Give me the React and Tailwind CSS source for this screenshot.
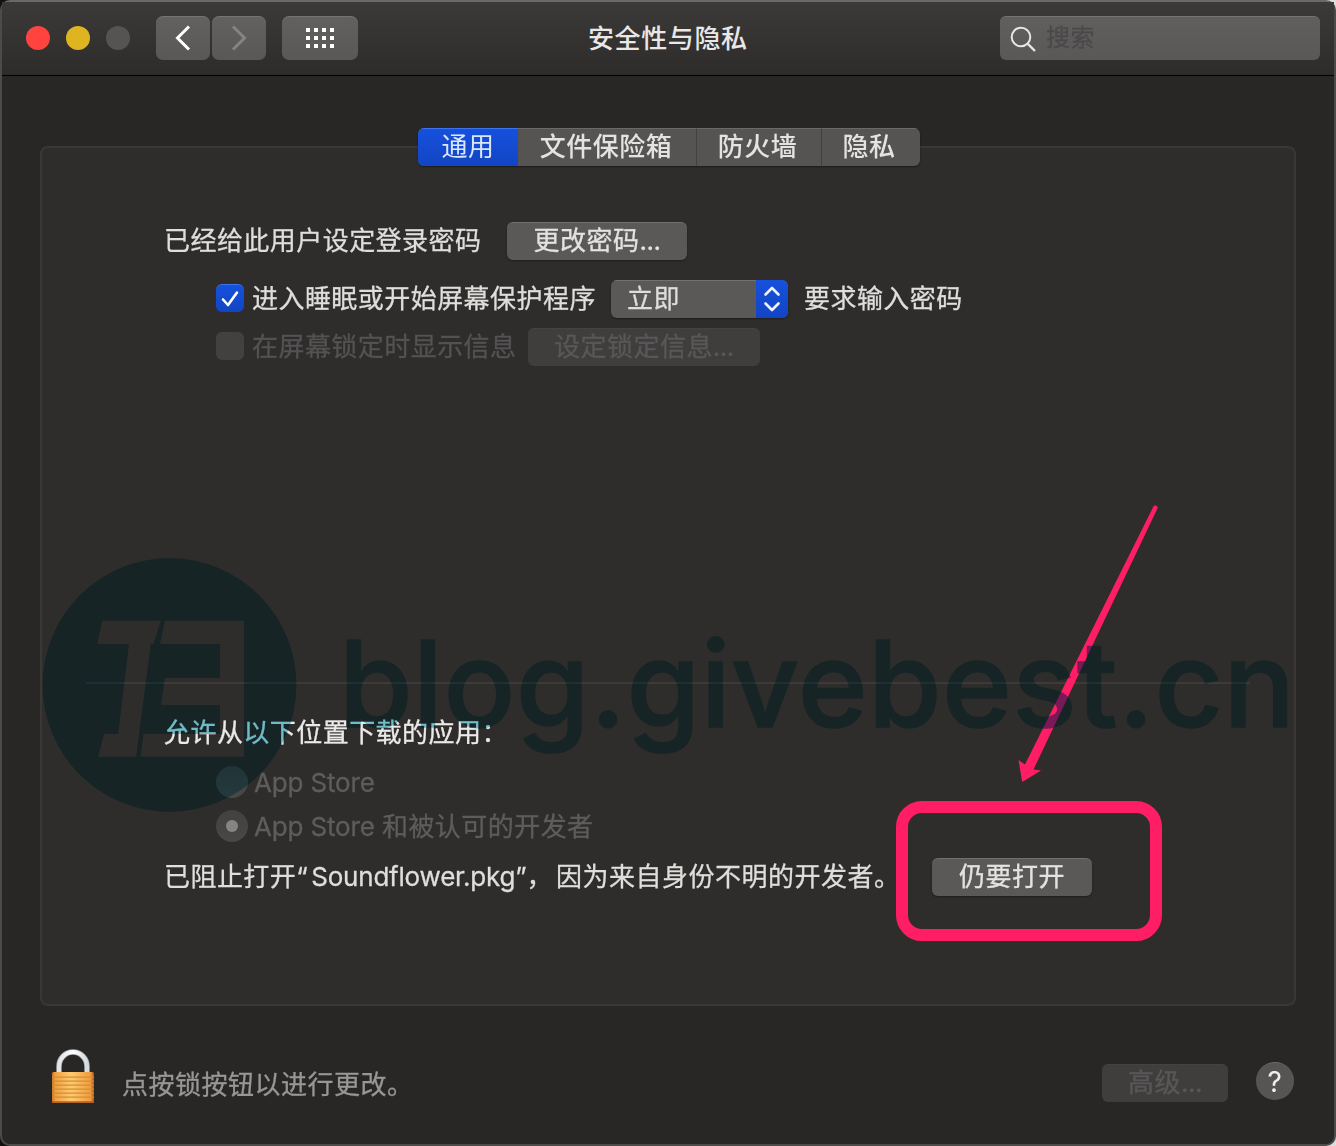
import React from "react";

const btn =
  "flex items-center justify-center rounded-[6px] bg-[#5b5958] border-t border-[#737170] pb-px text-[#e4e3e2] shadow-[0_1px_2px_rgba(0,0,0,0.35)] whitespace-nowrap";
const btnOff =
  "flex items-center justify-center rounded-[6px] bg-[#403e3d] border-t border-[#454342] pb-px text-[#595758] whitespace-nowrap";

function Dots() {
  return <span className="tracking-[-0.5px]">...</span>;
}

function TitleBar() {
  return (
    <header className="flex h-[74px] shrink-0 items-start border-b border-black bg-linear-to-b from-[#3c3a38] to-[#2e2c2b] pr-[14px] pl-[24px]">
      <div className="mt-[24px] flex gap-4">
        <span className="size-[24px] rounded-full bg-[#ff443f]" />
        <span className="size-[24px] rounded-full bg-[#deb521]" />
        <span className="size-[24px] rounded-full bg-[#565453]" />
      </div>
      <div className="mt-[14px] ml-[26px] flex gap-[2px]">
        <button className="flex h-[44px] w-[54px] items-center justify-center rounded-[7px] border-t border-[#767473] bg-linear-to-b from-[#636160] to-[#5a5857] pb-[2px]">
          <svg width="16" height="26" viewBox="0 0 16 26" fill="none" stroke="#fff" strokeWidth="3">
            <path d="M14 1.500 2.500 13 14 24.500" />
          </svg>
        </button>
        <button className="flex h-[44px] w-[54px] items-center justify-center rounded-[7px] border-t border-[#767473] bg-linear-to-b from-[#636160] to-[#5a5857] pb-[2px]">
          <svg width="16" height="26" viewBox="0 0 16 26" fill="none" stroke="#868483" strokeWidth="3">
            <path d="M2 1.500 13.500 13 2 24.500" />
          </svg>
        </button>
      </div>
      <button className="mt-[14px] ml-4 flex h-[44px] w-[76px] items-center justify-center rounded-[7px] border-t border-[#767473] bg-linear-to-b from-[#636160] to-[#5a5857] pb-[2px]">
        <span className="grid grid-cols-4 gap-[4px]">
          {Array.from({ length: 12 }, (_, i) => (
            <span key={i} className="size-[4px] bg-white" />
          ))}
        </span>
      </button>
      <h1 className="mt-[17px] ml-[230px] text-[26px] leading-[40px] font-medium tracking-[0.6px] whitespace-nowrap text-[#e9e8e7]">
        安全性与隐私
      </h1>
      <div className="mt-[14px] ml-auto flex h-[44px] w-[320px] items-center rounded-[6px] border-t border-[#767473] bg-linear-to-b from-[#615f5d] to-[#5a5856] pl-[10px]">
        <svg width="28" height="28" viewBox="0 0 28 28" fill="none" stroke="#e6e5e4" strokeWidth="2">
          <circle cx="11" cy="12" r="9.300" />
          <path d="m17.800 18.800 7.200 7.200" strokeWidth="2.400" />
        </svg>
        <span className="mb-[2px] ml-[8px] text-[24px] leading-[40px] text-[#4b494b] [-webkit-text-stroke:0.3px]">搜索</span>
      </div>
    </header>
  );
}

function Tabs() {
  return (
    <nav className="relative z-10 ml-[378px] flex h-[38px] w-[502px] overflow-hidden rounded-[6px] bg-[#565453] text-[#e4e3e2] shadow-[0_1px_2px_rgba(0,0,0,0.4)]">
      <span className="flex w-[100px] items-center justify-center border-t border-[#3d74ee] bg-linear-to-b from-[#1650dc] to-[#1245c4] pb-px text-[#dce6fa]">
        通用
      </span>
      <span className="flex w-[179px] items-center justify-center border-t border-r border-t-[#6c6a69] border-r-[#434140] pr-[2px] pb-px font-medium">
        文件保险箱
      </span>
      <span className="flex w-[125px] items-center justify-center border-t border-r border-t-[#6c6a69] border-r-[#434140] pr-[3px] pb-px font-medium">
        防火墙
      </span>
      <span className="flex flex-1 items-center justify-center border-t border-[#6c6a69] pr-[4px] pb-px font-medium">隐私</span>
    </nav>
  );
}

function Panel() {
  return (
    <main className="-mt-[20px] h-[860px] rounded-[8px] border-2 border-[#3a3837] bg-[#2f2d2b] text-[#dfdedd] [-webkit-text-stroke:0.3px]">
      <div className="mt-[73px] ml-[122px] flex h-[40px] items-center whitespace-nowrap">
        <span className="w-[343px]">已经给此用户设定登录密码</span>
        <button className={btn + " h-[38px] w-[180px]"}>
          更改密码
          <Dots />
        </button>
      </div>
      <div className="mt-[18px] ml-[174px] flex h-[40px] items-center whitespace-nowrap">
        <span className="mb-[2px] flex size-[28px] items-center justify-center rounded-[6px] border-t border-[#3d74ee] bg-linear-to-b from-[#1650dc] to-[#1245c4]">
          <svg width="20" height="20" viewBox="0 0 20 20" fill="none" stroke="#fff" strokeWidth="2.600" strokeLinecap="round" strokeLinejoin="round">
            <path d="m3 10.500 5 5.500L17 3.500" />
          </svg>
        </span>
        <span className="ml-[8px] w-[359px]">进入睡眠或开始屏幕保护程序</span>
        <span className="flex h-[38px] w-[177px] items-stretch overflow-hidden rounded-[6px] bg-[#5b5958] shadow-[0_1px_2px_rgba(0,0,0,0.35)]">
          <span className="flex flex-1 items-center border-t border-[#737170] pb-px pl-4">立即</span>
          <span className="flex w-[32px] items-center justify-center bg-linear-to-b from-[#1650dc] to-[#1245c4]">
            <svg width="18" height="26" viewBox="0 0 18 26" fill="none" stroke="#eef2fd" strokeWidth="2.600" strokeLinecap="round" strokeLinejoin="round">
              <path d="m2.500 8.500 6.500-6.500 6.500 6.500M2.500 17.500 9 24l6.500-6.500" />
            </svg>
          </span>
        </span>
        <span className="ml-[16px]">要求输入密码</span>
      </div>
      <div className="mt-[8px] ml-[174px] flex h-[40px] items-center whitespace-nowrap text-[#545253]">
        <span className="mb-[2px] size-[28px] rounded-[6px] bg-[#434140]" />
        <span className="ml-[8px] w-[276px]">在屏幕锁定时显示信息</span>
        <button className={btnOff + " h-[38px] w-[232px]"}>
          设定锁定信息
          <Dots />
        </button>
      </div>
      <hr className="mx-[44px] mt-[315px] border-0 border-t-2 border-[#3d3b3a] bg-transparent" />
      <p className="mt-[29px] ml-[122px] h-[40px] leading-[40px] whitespace-nowrap text-[#ebeae9]">允许从以下位置下载的应用：</p>
      <div className="mt-[9px] ml-[174px] flex h-[40px] items-center whitespace-nowrap text-[#5e5c5d]">
        <span className="size-[32px] rounded-full bg-linear-to-b from-[#434140] to-[#4a4847]" />
        <span className="ml-[6px] pt-[2px] tracking-[-0.15px]">App Store</span>
      </div>
      <div className="mt-[4px] ml-[174px] flex h-[40px] items-center whitespace-nowrap text-[#5e5c5d]">
        <span className="flex size-[32px] items-center justify-center rounded-full bg-linear-to-b from-[#434140] to-[#4a4847]">
          <span className="size-[12px] rounded-full bg-[#868485]" />
        </span>
        <span className="ml-[6px] pt-[2px]">
          <span className="tracking-[-0.15px]">App Store </span>和被认可的开发者
        </span>
      </div>
      <div className="mt-[11px] ml-[122px] flex h-[40px] items-center whitespace-nowrap">
        <span className="w-[768px]">
          已阻止打开<span className="mr-[3px]">“</span>
          <span className="tracking-[-0.2px]">Soundflower.pkg”</span>
          <span className="mr-[3px]">，</span>
          <span className="tracking-[0.5px]">因为来自身份不明的开发者。</span>
        </span>
        <button className={btn + " h-[38px] w-[160px]"}>仍要打开</button>
      </div>
    </main>
  );
}

function Lock() {
  return (
    <svg width="46" height="58" viewBox="0 0 46 58" className="shrink-0">
      <defs>
        <linearGradient id="gold" x1="0" x2="1" y1="0" y2="0">
          <stop offset="0" stopColor="#c9752a" />
          <stop offset="0.080" stopColor="#f0a040" />
          <stop offset="0.450" stopColor="#ffcb70" />
          <stop offset="0.920" stopColor="#f09c3c" />
          <stop offset="1" stopColor="#a9531a" />
        </linearGradient>
        <linearGradient id="steel" x1="0" x2="1" y1="0" y2="0">
          <stop offset="0" stopColor="#dfe4e6" />
          <stop offset="0.500" stopColor="#fff" />
          <stop offset="1" stopColor="#d5dbdd" />
        </linearGradient>
      </defs>
      <path d="M9 30V19.500a14 14.500 0 0 1 28 0V30" fill="none" stroke="#a3acaf" strokeWidth="5.500" />
      <path d="M9 30V19.500a14 14.500 0 0 1 28 0V30" fill="none" stroke="url(#steel)" strokeWidth="4" />
      <rect x="2" y="25" width="42" height="31" rx="1.500" fill="url(#gold)" />
      {[29.5, 33.5, 37.5, 41.5, 45.5, 49.5].map((y) => (
        <rect key={y} x="2" y={y} width="42" height="1.200" fill="#d58b35" />
      ))}
      <rect x="2" y="54.200" width="42" height="1.800" rx="0.900" fill="#b8601f" />
    </svg>
  );
}

function Footer() {
  return (
    <footer className="mt-[41px] flex h-[70px] items-start [-webkit-text-stroke:0.3px]">
      <div className="ml-[10px]">
        <Lock />
      </div>
      <span className="mt-[18px] ml-[26px] leading-[40px] tracking-[0.5px] whitespace-nowrap text-[#989697]">
        点按锁按钮以进行更改。
      </span>
      <button className={btnOff + " mt-[17px] ml-auto h-[38px] w-[126px]"}>
        高级
        <Dots />
      </button>
      <button className="mt-[15px] mr-[2px] ml-[28px] flex size-[38px] items-center justify-center rounded-full border-t border-[#6c6a69] bg-[#575554] text-[28px] text-[#efeeed] [-webkit-text-stroke:0px]">
        ?
      </button>
    </footer>
  );
}

function Annotations() {
  return (
    <>
      <svg className="pointer-events-none absolute top-[500px] left-[1010px]" width="160" height="290" viewBox="1010 500 160 290" fill="#ff1e66">
        <path d="M1153.300 506.800a2.200 2.200 0 0 1 4 2L1033.500 769.500l7.500 1-18.800 11.500-3.700-22 6.500 4.500Z" />
      </svg>
      <div className="pointer-events-none absolute top-[801px] left-[896px] h-[140px] w-[266px] rounded-[26px] border-[12px] border-[#ff1e66]" />
    </>
  );
}

function Watermark() {
  return (
    <div className="pointer-events-none absolute top-[557px] left-[42px] flex h-[256px] w-[1260px] text-[#7bccdb]">
      <svg width="256" height="256" viewBox="0 0 256 256" fill="currentColor" className="shrink-0">
        <path
          fillRule="evenodd"
          d="M127.500 1a127 127 0 1 1 0 254 127 127 0 0 1 0-254ZM60.300 63.700H118.700L111.300 87H108.700L94 199.700H56.300L62 177H76.300L87 87H55.300ZM123 63.700H202V199.700H98.700L101.500 177H178V148H119L123 121H178V87H118Z"
        />
      </svg>
      <span className="mt-[55px] ml-[41px] font-[Inter] text-[119px] leading-[144px] font-medium tracking-[0.45px] whitespace-nowrap [-webkit-text-stroke:1.6px]">
        blog.givebest.cn
      </span>
    </div>
  );
}

export default function App() {
  return (
    <div className="h-[1146px] w-[1336px] overflow-hidden bg-linear-to-r from-[#111] from-50% to-[#ddd] to-50% font-[Inter,'Noto_Sans_CJK_SC',sans-serif] text-[26px] leading-[38px] tracking-[0.45px]">
      <div className="relative isolate flex h-full flex-col rounded-[10px] border-2 border-[#4d4b4a] border-t-[#6b6968] bg-[#292725]">
        <TitleBar />
        <div className="flex flex-col px-[38px] pt-[52px]">
          <Tabs />
          <Panel />
          <Footer />
        </div>
        <div className="absolute -top-[2px] -left-[2px] h-[1146px] w-[1336px]">
          <Annotations />
        </div>
        <div className="absolute -top-[2px] -left-[2px] h-[1146px] w-[1336px] mix-blend-multiply">
          <Watermark />
        </div>
      </div>
    </div>
  );
}
